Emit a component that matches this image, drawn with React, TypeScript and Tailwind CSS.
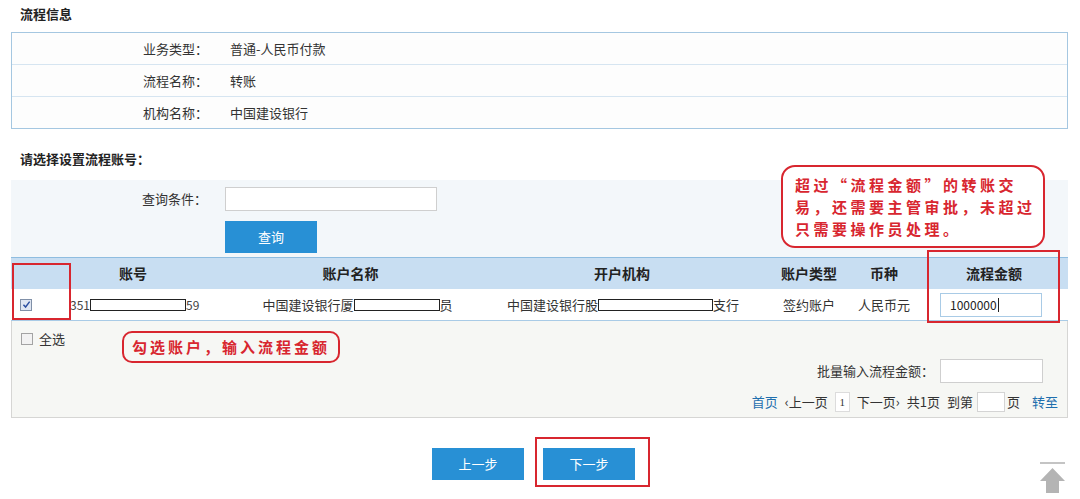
import React from "react";

const infoRows = [
  ["业务类型：", "普通-人民币付款"],
  ["流程名称：", "转账"],
  ["机构名称：", "中国建设银行"],
];

const Check = ({ checked }: { checked?: boolean }) => (
  <span
    className={`inline-flex h-[12px] w-[12px] items-center justify-center border ${
      checked ? "border-[#8090a8] bg-[#dfe6f2]" : "border-[#a3a3a3] bg-[#f2f2f2]"
    }`}
  >
    {checked && (
      <svg viewBox="0 0 10 10" className="h-[9px] w-[9px]">
        <path d="M1.6 5.2 L4 7.8 L8.5 1.8" fill="none" stroke="#2b4ea0" strokeWidth="1.6" />
      </svg>
    )}
  </span>
);

const Masked = ({ w }: { w: number }) => (
  <span className="inline-block h-[12px] shrink-0 border border-[#222] bg-white" style={{ width: w }} />
);

const App = () => {
  return (
    <div className="relative h-[499px] w-[1080px] overflow-hidden bg-white font-['Noto_Sans_CJK_SC','Noto_Sans',sans-serif] text-[13px] text-[#333]">
      <div className="pl-[11px] pr-[12px]">
        <div className="flex h-[32px] items-center pb-[4px] pl-[9px] text-[13px] font-bold text-[#222]">流程信息</div>

        <div className="border border-[#a5c7e1] bg-[#fdfdfd]">
          {infoRows.map(([k, v], i) => (
            <div key={k} className={`flex items-center ${i > 0 ? "h-[32px] border-t border-[#d6e5f1]" : "h-[31px]"}`}>
              <span className="w-[196px] text-right">{k}</span>
              <span className="ml-[22px]">{v}</span>
            </div>
          ))}
        </div>

        <div className="flex h-[51px] items-center pl-[9px] pt-[8px] text-[13px] font-bold text-[#222]">请选择设置流程账号：</div>

        <div className="bg-[#f3f7fa] pb-[4px] pt-[7px]">
          <div className="flex items-center">
            <span className="w-[196px] text-right">查询条件：</span>
            <span className="ml-[18px] h-[24px] w-[212px] border border-[#cfcfcf] bg-white" />
          </div>
          <div className="mt-[10px] pl-[214px]">
            <button className="h-[32px] w-[92px] bg-[#2890d5] text-[13px] text-white">查询</button>
          </div>
        </div>

        <div className="flex h-[32px] items-center border-t border-[#8fbde0] bg-[#c8def2] text-[14px] font-bold text-[#222]">
          <span className="w-[59px]" />
          <span className="w-[126px] text-center">账号</span>
          <span className="w-[309px] text-center">账户名称</span>
          <span className="w-[265px] pr-[31px] text-center">开户机构</span>
          <span className="w-[78px] text-center">账户类型</span>
          <span className="w-[72px] text-center">币种</span>
          <span className="flex-1 text-center">流程金额</span>
        </div>
        <div className="flex h-[32px] items-center whitespace-nowrap border-b border-[#a9cbe6] bg-white">
          <span className="flex w-[59px] pl-[9px]">
            <Check checked />
          </span>
          <span className="flex w-[126px] items-center text-[12px] text-[#444]">
            <span>351</span>
            <Masked w={96} />
            <span>59</span>
          </span>
          <span className="flex w-[309px] items-center justify-center pl-[14px]">
            <span>中国建设银行厦</span>
            <Masked w={86} />
            <span>员</span>
          </span>
          <span className="flex w-[265px] items-center pl-[2px]">
            <span>中国建设银行股</span>
            <Masked w={115} />
            <span>支行</span>
          </span>
          <span className="w-[78px] text-center">签约账户</span>
          <span className="w-[72px] text-center">人民币元</span>
          <span className="flex flex-1 justify-center pr-[6px]">
            <span className="flex h-[24px] w-[102px] items-center border border-[#a9cbe6] bg-white pl-[9px] text-[12px] text-[#222]">
              1000000<span className="ml-[1px] h-[14px] w-[1px] bg-[#222]" />
            </span>
          </span>
        </div>

        <div className="border-x border-b border-[#d6d6d4] bg-[#f6f7f4] pb-[5px] pt-[10px]">
          <div className="flex h-[16px] items-center pl-[9px]">
            <Check />
            <span className="ml-[6px]">全选</span>
          </div>
          <div className="mt-[12px] flex items-center justify-end pr-[24px]">
            <span>批量输入流程金额：</span>
            <span className="ml-[6px] h-[24px] w-[103px] border border-[#cfcfcf] bg-white" />
          </div>
          <div className="mt-[9px] flex h-[20px] items-center justify-end gap-[7px] pr-[9px]">
            <span className="text-[#1f6fae]">首页</span>
            <span>‹上一页</span>
            <span className="flex h-[20px] w-[15px] items-center justify-center border border-[#dcdcdc] bg-white font-['Liberation_Serif',serif] text-[11px]">1</span>
            <span>下一页›</span>
            <span>共1页</span>
            <span className="flex items-center">
              到第
              <span className="ml-[4px] h-[20px] w-[28px] border border-[#d4d4d4] bg-white" />
              <span className="ml-[2px]">页</span>
            </span>
            <span className="ml-[5px] text-[#1f6fae]">转至</span>
          </div>
        </div>

        <div className="mt-[30px] flex justify-center gap-[19px] pr-[12px]">
          <button className="h-[32px] w-[92px] bg-[#2890d5] text-[13px] text-white">上一步</button>
          <button className="h-[32px] w-[92px] bg-[#2890d5] text-[13px] text-white">下一步</button>
        </div>
      </div>

      {/* annotations */}
      <div className="absolute left-[781px] top-[165px] h-[83px] w-[264px] rounded-[14px] border-2 border-[#d8262f] bg-white pl-[12px] pt-[7px] text-[15px] font-bold leading-[22px] tracking-[3.5px] text-[#d8262f]">
        超过“流程金额”的转账交
        <br />
        易，还需要主管审批，未超过
        <br />
        只需要操作员处理。
      </div>
      <div className="absolute left-[12px] top-[263px] h-[57px] w-[59px] border-2 border-[#d8262f]" />
      <div className="absolute left-[927px] top-[250px] h-[73px] w-[133px] border-2 border-[#d8262f]" />
      <div className="absolute left-[122px] top-[331px] flex h-[32px] w-[218px] items-center justify-center rounded-[10px] border-2 border-[#d8262f] text-[15px] font-bold tracking-[3px] text-[#d8262f]">
        勾选账户，输入流程金额
      </div>
      <div className="absolute left-[535px] top-[437px] h-[50px] w-[115px] border-2 border-[#d8262f]" />

      <svg className="absolute left-[1039px] top-[461px]" width="27" height="33" viewBox="0 0 27 33">
        <rect x="1" y="1" width="25" height="2" fill="#c4c4c4" />
        <path d="M13.5 7 L26 20 L20 20 L20 32 L7 32 L7 20 L1 20 Z" fill="#b4b4b4" />
      </svg>
    </div>
  );
};

export default App;
